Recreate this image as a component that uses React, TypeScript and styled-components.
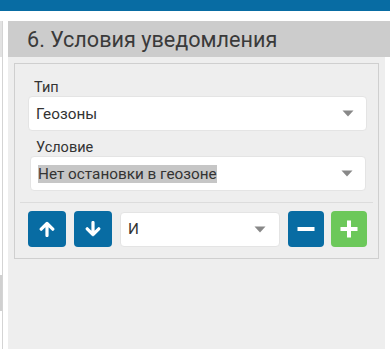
import React from "react";
import styled, { createGlobalStyle } from "styled-components";

const GlobalStyle = createGlobalStyle`
  html, body {
    margin: 0;
    padding: 0;
    background: #fff;
    font-family: Roboto, "Liberation Sans", Arial, sans-serif;
  }
  * {
    box-sizing: border-box;
  }
`;

const ArrowIcon: React.FC<{ dir: "up" | "down" }> = ({ dir }) => (
  <svg
    width="16"
    height="16"
    viewBox="0 0 16 16"
    style={{ transform: dir === "down" ? "rotate(180deg)" : undefined }}
  >
    <path
      d="M8 14.5V2.5M2.2 8.2L8 2.4l5.8 5.8"
      stroke="#fff"
      strokeWidth="3.2"
      strokeLinecap="round"
      strokeLinejoin="round"
      fill="none"
    />
  </svg>
);

const SignIcon: React.FC<{ plus?: boolean }> = ({ plus }) => (
  <svg width="18" height="18" viewBox="0 0 18 18">
    <rect x="0.5" y="7" width="17" height="4" fill="#fff" />
    {plus && <rect x="7" y="0.5" width="4" height="17" fill="#fff" />}
  </svg>
);

const Caret = () => (
  <svg width="12" height="7" viewBox="0 0 12 7">
    <path d="M0.5 0.5h11L6 6.5z" fill="#888" />
  </svg>
);

const App: React.FC = () => {
  return (
    <>
      <GlobalStyle />
      <TopBar />
      <Page>
        <Stub>
          <StubHead />
          <StubBlock />
        </Stub>
        <Panel>
          <Header>6. Условия уведомления</Header>
          <Body>
            <Box>
              <Field>
                <Label>Тип</Label>
                <Select>
                  <Value>Геозоны</Value>
                  <Caret />
                </Select>
              </Field>
              <Field indent>
                <Label>Условие</Label>
                <Select>
                  <Value>
                    <Selected>Нет остановки в геозоне</Selected>
                  </Value>
                  <Caret />
                </Select>
              </Field>
              <Divider />
              <Row>
                <Btn>
                  <ArrowIcon dir="up" />
                </Btn>
                <Btn>
                  <ArrowIcon dir="down" />
                </Btn>
                <Select small>
                  <Value>И</Value>
                  <Caret />
                </Select>
                <Btn narrow>
                  <SignIcon />
                </Btn>
                <Btn narrow green>
                  <SignIcon plus />
                </Btn>
              </Row>
            </Box>
          </Body>
        </Panel>
      </Page>
    </>
  );
};

export default App;

const TopBar = styled.div`
  height: 11px;
  background: #086ca3;
`;

const Page = styled.div`
  display: flex;
  margin-top: 10px;
  height: 328px;
`;

const Stub = styled.div`
  width: 3px;
  margin-right: 5px;
  border-right: 1px solid #d4d4d4;
  display: flex;
  flex-direction: column;
`;

const StubHead = styled.div`
  height: 36px;
  background: #e2e2e2;
`;

const StubBlock = styled.div`
  height: 36px;
  margin-top: 218px;
  background: #d0d0d0;
`;

const Panel = styled.div`
  flex: 1;
  display: flex;
  flex-direction: column;
`;

const Header = styled.div`
  height: 36px;
  background: #cccccc;
  color: #3a3a3a;
  font-size: 21.6px;
  font-weight: 400;
  padding-left: 19px;
  display: flex;
  align-items: center;
`;

const Body = styled.div`
  flex: 1;
  background: #eeeeee;
  margin-right: 5px;
  padding: 6px 6px 0 6px;
`;

const Box = styled.div`
  border: 1px solid #cfcfcf;
  padding: 16px 11px 11px 13px;
`;

const Field = styled.div<{ indent?: boolean }>`
  margin: ${({ indent }) => (indent ? "9px 1px 0 2px" : "0")};
`;

const Label = styled.div`
  font-size: 14.5px;
  line-height: 16px;
  color: #333;
  padding-left: 6px;
`;

const Select = styled.div<{ small?: boolean }>`
  flex: ${({ small }) => (small ? "1" : "none")};
  height: 35px;
  background: #fff;
  border: 1px solid #e4e4e4;
  border-radius: 4px;
  display: flex;
  align-items: center;
  padding: 0 ${({ small }) => (small ? "13px" : "12px")} 0 7px;
  margin: ${({ small }) => (small ? "0 8px 0 0" : "0")};
`;

const Value = styled.div`
  flex: 1;
  font-size: 15.3px;
  color: #333;
`;

const Selected = styled.span`
  background: #c6c6c6;
`;

const Divider = styled.div`
  height: 1px;
  background: #dcdcdc;
  margin: 11px -6px 8px -8px;
`;

const Row = styled.div`
  display: flex;
  align-items: center;
`;

const Btn = styled.div<{ narrow?: boolean; green?: boolean }>`
  width: ${({ narrow }) => (narrow ? "36px" : "38px")};
  height: 36px;
  border-radius: 4px;
  background: ${({ green }) => (green ? "#6cc85a" : "#086ca3")};
  display: flex;
  align-items: center;
  justify-content: center;
  margin-right: ${({ narrow }) => (narrow ? "7px" : "8px")};

  &:last-child {
    margin-right: 0;
  }
`;
